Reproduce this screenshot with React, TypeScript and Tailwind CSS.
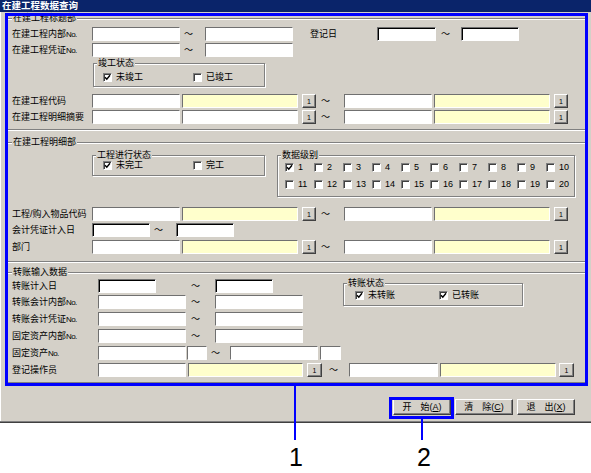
import React from "react";

const font = "font-['Liberation_Sans','Noto_Sans_CJK_SC',sans-serif]";

function Field({ className }: { className: string }) {
  return (
    <div
      className={`h-[14px] shrink-0 border border-t-[#707070] border-l-[#707070] border-r-white border-b-white ${className}`}
    />
  );
}

function Btn1({ className = "" }: { className?: string }) {
  return (
    <div
      className={`w-[14px] h-[14px] shrink-0 flex items-center justify-center bg-[#d4d0c8] border border-t-white border-l-white border-r-[#404040] border-b-[#404040] shadow-[inset_-1px_-1px_0_#808080] text-[7px] leading-none ${className}`}
    >
      1
    </div>
  );
}

function Tilde({ className }: { className: string }) {
  return <span className={`shrink-0 text-[9px] leading-[14px] ${className}`}>～</span>;
}

function Check({ checked, label, className = "" }: { checked?: boolean; label: string; className?: string }) {
  return (
    <div className={`flex items-center h-[10px] shrink-0 ${className}`}>
      <div className="w-[9px] h-[9px] shrink-0 flex items-center justify-center bg-white border border-t-[#808080] border-l-[#808080] border-r-white border-b-white shadow-[inset_1px_1px_0_#404040]">
        {checked && (
          <svg width="7" height="7" viewBox="0 0 7 7">
            <path d="M1 3.2 L2.8 5.2 L6 1.2" stroke="black" strokeWidth="1.4" fill="none" />
          </svg>
        )}
      </div>
      <span className="ml-[4px] text-[9px] leading-[10px] whitespace-nowrap">{label}</span>
    </div>
  );
}

function Group({ label, className, children }: { label: string; className: string; children?: React.ReactNode }) {
  return (
    <div className={`relative shrink-0 border border-[#808080] shadow-[inset_1px_1px_0_#fff,1px_1px_0_#fff] ${className}`}>
      <span className="absolute -top-[6px] left-[3px] bg-[#d4d0c8] px-[1px] text-[9px] leading-[10px] whitespace-nowrap">
        {label}
      </span>
      {children}
    </div>
  );
}

function Section({ label, className, children }: { label: string; className: string; children: React.ReactNode }) {
  return (
    <div
      className={`relative border-t border-t-[#808080] border-b border-b-white shadow-[inset_0_1px_0_#fff,inset_0_-1px_0_#808080] pl-[6px] ${className}`}
    >
      <span className="absolute -top-[6px] left-[6px] bg-[#d4d0c8] px-[1px] text-[9px] leading-[10px] whitespace-nowrap">
        {label}
      </span>
      {children}
    </div>
  );
}

// "No." is drawn narrow in the original font
function Label({ text, className = "w-[80px]" }: { text: string; className?: string }) {
  const hasNo = text.endsWith("No.");
  return (
    <span className={`shrink-0 text-[9px] leading-[14px] whitespace-nowrap ${className}`}>
      {hasNo ? text.slice(0, -3) : text}
      {hasNo && <span className="text-[8px] tracking-[-0.6px]">No.</span>}
    </span>
  );
}

// 代码行: white + yellow + [1] ~ white + yellow + [1]
function CodeRow({ label, mt, firstYellow = true }: { label: string; mt: string; firstYellow?: boolean }) {
  return (
    <div className={`flex items-center h-[14px] ${mt}`}>
      <Label text={label} />
      <Field className="w-[88px] bg-white" />
      <Field className={`w-[116px] ml-[2px] ${firstYellow ? "bg-[#ffffcc]" : "bg-white"}`} />
      <Btn1 className="ml-[4px]" />
      <Tilde className="w-[28px] pl-[5px]" />
      <Field className="w-[88px] bg-white" />
      <Field className="w-[116px] ml-[2px] bg-[#ffffcc]" />
      <Btn1 className="ml-[4px]" />
    </div>
  );
}

function RangeRow({ label, mt }: { label: string; mt: string }) {
  return (
    <div className={`flex items-center h-[14px] ${mt}`}>
      <Label text={label} className="w-[86px]" />
      <Field className="w-[88px] bg-white" />
      <Tilde className="w-[29px] pl-[5px]" />
      <Field className="w-[88px] bg-white" />
    </div>
  );
}

export default function App() {
  const levels = Array.from({ length: 20 }, (_, i) => i + 1);

  return (
    <div className={`relative w-[591px] h-[473px] bg-white text-black ${font}`}>
      {/* 窗口 */}
      <div className="w-[591px] h-[423px] bg-[#d4d0c8] border-b border-b-[#404040] shadow-[inset_0_-1px_0_#808080,inset_1px_0_0_#fff] flex flex-col">
        <div className="h-[12px] bg-[#0a246a] text-white text-[9.5px] font-bold leading-[12px] pl-[2px]">
          在建工程数据查询
        </div>

        <div className="px-[6px]">
          {/* 标题部 */}
          <Section label="在建工程标题部" className="mt-[6px] pb-[6px]">
            <div className="flex items-center h-[14px] mt-[8px]">
              <Label text="在建工程内部No." />
              <Field className="w-[88px] bg-white" />
              <Tilde className="w-[25px] pl-[4px]" />
              <Field className="w-[88px] bg-white" />
              <span className="ml-[17px] w-[67px] shrink-0 text-[9px] leading-[14px]">登记日</span>
              <Field className="w-[59px] bg-white shadow-[inset_1px_1px_0_#000]" />
              <Tilde className="w-[25px] pl-[5px]" />
              <Field className="w-[58px] bg-white shadow-[inset_1px_1px_0_#000]" />
            </div>
            <div className="flex items-center h-[14px] mt-[2px]">
              <Label text="在建工程凭证No." />
              <Field className="w-[88px] bg-white" />
              <Tilde className="w-[25px] pl-[4px]" />
              <Field className="w-[88px] bg-white" />
            </div>
            <Group label="竣工状态" className="ml-[81px] mt-[6px] w-[172px] h-[24px] pt-[8px] pl-[9px]">
              <div className="flex">
                <Check checked label="未竣工" className="w-[90px]" />
                <Check label="已竣工" />
              </div>
            </Group>
            <CodeRow label="在建工程代码" mt="mt-[7px]" />
            <CodeRow label="在建工程明细摘要" mt="mt-[2px]" firstYellow={false} />
          </Section>

          {/* 明细部 */}
          <Section label="在建工程明细部" className="mt-[11px] pb-[8px]">
            <div className="flex items-start mt-[12px] h-[42px]">
              <Group label="工程进行状态" className="ml-[80px] w-[173px] h-[21px] pt-[4px] pl-[10px]">
                <div className="flex">
                  <Check checked label="未完工" className="w-[90px]" />
                  <Check label="完工" />
                </div>
              </Group>
              <Group label="数据级别" className="ml-[12px] w-[298px] h-[42px] pt-[6px] pl-[7px]">
                <div className="grid grid-cols-[repeat(10,29px)] gap-y-[7px]">
                  {levels.map((n) => (
                    <Check key={n} checked={n === 1} label={String(n)} />
                  ))}
                </div>
              </Group>
            </div>
            <CodeRow label="工程/购入物品代码" mt="mt-[10px]" />
            <div className="flex items-center h-[14px] mt-[2px]">
              <Label text="会计凭证计入日" />
              <Field className="w-[58px] bg-white shadow-[inset_1px_1px_0_#000]" />
              <Tilde className="w-[26px] pl-[4px]" />
              <Field className="w-[58px] bg-white shadow-[inset_1px_1px_0_#000]" />
            </div>
            <CodeRow label="部门" mt="mt-[3px]" />
          </Section>

          {/* 转账输入数据 */}
          <Section label="转账输入数据" className="mt-[9px] pb-[6px]">
            <div className="flex items-start">
              <div className="w-[331px] shrink-0">
                <div className="flex items-center h-[14px] mt-[6px]">
                  <Label text="转账计入日" className="w-[86px]" />
                  <Field className="w-[58px] bg-white shadow-[inset_1px_1px_0_#000]" />
                  <Tilde className="w-[59px] pl-[35px]" />
                  <Field className="w-[58px] bg-white shadow-[inset_1px_1px_0_#000]" />
                </div>
                <RangeRow label="转账会计内部No." mt="mt-[2px]" />
                <RangeRow label="转账会计凭证No." mt="mt-[3px]" />
                <RangeRow label="固定资产内部No." mt="mt-[3px]" />
                <div className="flex items-center h-[14px] mt-[3px]">
                  <Label text="固定资产No." className="w-[86px]" />
                  <Field className="w-[88px] bg-white" />
                  <Field className="w-[20px] ml-[1px] bg-white" />
                  <Tilde className="w-[23px] pl-[4px]" />
                  <Field className="w-[88px] bg-white" />
                  <Field className="w-[21px] ml-[2px] bg-white" />
                </div>
              </div>
              <Group label="转账状态" className="mt-[10px] w-[180px] h-[23px] pt-[6px] pl-[11px]">
                <div className="flex">
                  <Check checked label="未转账" className="w-[84px]" />
                  <Check checked label="已转账" />
                </div>
              </Group>
            </div>
            <div className="flex items-center h-[14px] mt-[3px]">
              <Label text="登记操作员" className="w-[86px]" />
              <Field className="w-[88px] bg-white" />
              <Field className="w-[115px] ml-[2px] bg-[#ffffcc]" />
              <Btn1 className="ml-[4px] w-[15px]" />
              <Tilde className="w-[27px] pl-[7px]" />
              <Field className="w-[89px] bg-white" />
              <Field className="w-[116px] ml-[2px] bg-[#ffffcc]" />
              <Btn1 className="ml-[3px] w-[15px]" />
            </div>
          </Section>
        </div>

        {/* 按钮 */}
        <div className="flex justify-end gap-[4px] pr-[16px] mt-[15px]">
          {[
            ["开　始(", "A", ")"],
            ["清　除(", "C", ")"],
            ["退　出(", "X", ")"],
          ].map(([a, k, b]) => (
            <div
              key={k}
              className="w-[58px] h-[16px] flex items-center justify-center bg-[#d4d0c8] border border-t-white border-l-white border-r-[#404040] border-b-[#404040] shadow-[inset_-1px_-1px_0_#808080] text-[9px] leading-none whitespace-nowrap"
            >
              {a}
              <u>{k}</u>
              {b}
            </div>
          ))}
        </div>
      </div>

      {/* 标注 */}
      <div className="absolute left-[5px] top-[13px] w-[583px] h-[373px] border-[3px] border-[#0000ff] pointer-events-none" />
      <div className="absolute left-[389px] top-[397px] w-[65px] h-[22px] border-[3px] border-[#0000ff] pointer-events-none" />
      <div className="absolute left-[294px] top-[386px] w-[2px] h-[54px] bg-[#0000ff]" />
      <div className="absolute left-[421px] top-[419px] w-[2px] h-[21px] bg-[#0000ff]" />
      <span className="absolute left-[289px] top-[445px] text-[25px] leading-none font-['Liberation_Sans',sans-serif]">1</span>
      <span className="absolute left-[417px] top-[445px] text-[25px] leading-none font-['Liberation_Sans',sans-serif]">2</span>
    </div>
  );
}
